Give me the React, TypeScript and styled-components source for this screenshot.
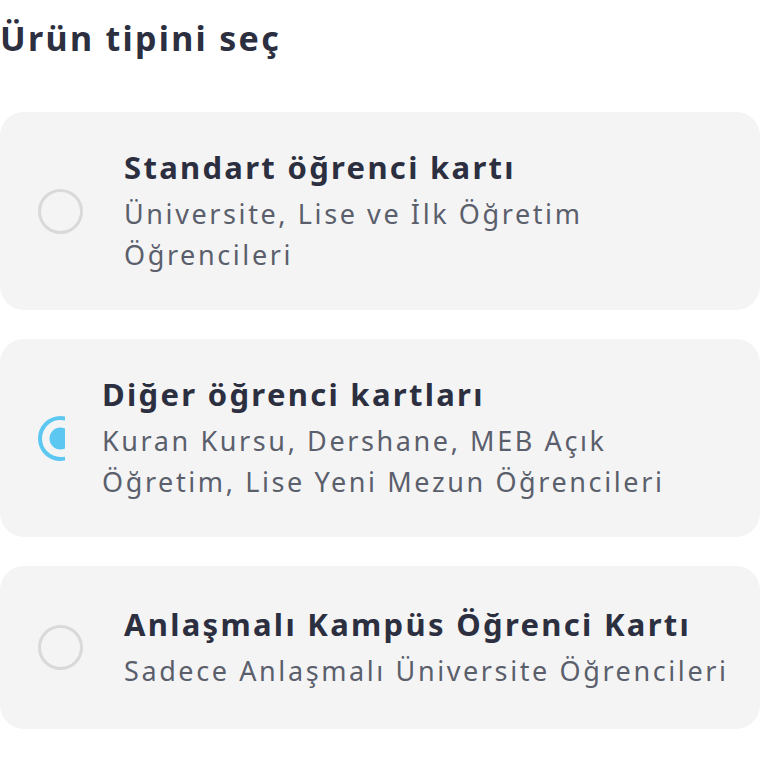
import React from "react";
import styled, { createGlobalStyle } from "styled-components";

const GlobalStyle = createGlobalStyle`
  html, body {
    margin: 0;
    padding: 0;
    background: #ffffff;
  }
  body {
    font-family: "Noto Sans", "Open Sans", sans-serif;
    -webkit-font-smoothing: antialiased;
  }
`;

const Page = styled.div`
  width: 768px;
  padding-top: 10px;
  overflow: hidden;
`;

const Heading = styled.h1`
  margin: 0;
  font-size: 34px;
  line-height: 56px;
  font-weight: 700;
  letter-spacing: 2.3px;
  color: #2c2f40;
`;

const List = styled.div`
  display: flex;
  flex-direction: column;
  gap: 29px;
  margin-top: 46px;
  width: 760px;
`;

const Card = styled.label<{ $shift?: boolean; $single?: boolean }>`
  display: flex;
  align-items: center;
  gap: ${(p) => (p.$shift ? "37px" : "41px")};
  padding: ${(p) => (p.$single ? "38px" : "35px")} 20px;
  padding-left: 38px;
  background: #f4f4f5;
  border-radius: 24px;
  cursor: pointer;
`;

const RadioBox = styled.div<{ $clip?: boolean }>`
  flex: none;
  width: ${(p) => (p.$clip ? "27px" : "45px")};
  height: 45px;
  overflow: hidden;
`;

const Texts = styled.div`
  display: flex;
  flex-direction: column;
  gap: 6px;
`;

const Title = styled.div`
  font-size: 31px;
  line-height: 40px;
  font-weight: 700;
  letter-spacing: 2.3px;
  color: #2c2f40;
  white-space: nowrap;
`;

const Sub = styled.div`
  font-size: 27px;
  line-height: 41px;
  font-weight: 400;
  letter-spacing: 2.6px;
  color: #5b5f6c;
  white-space: nowrap;
`;

function Radio({ checked, clip }: { checked?: boolean; clip?: boolean }) {
  return (
    <RadioBox $clip={clip}>
      <svg width="45" height="45" viewBox="0 0 45 45">
        {checked ? (
          <>
            <circle cx="22.5" cy="22.5" r="20.5" fill="none" stroke="#5cc8f2" strokeWidth="4" />
            <circle cx="22.5" cy="22.5" r="11" fill="#5cc8f2" />
          </>
        ) : (
          <circle cx="22.5" cy="22.5" r="21" fill="none" stroke="#d9d9db" strokeWidth="3" />
        )}
      </svg>
    </RadioBox>
  );
}

const options = [
  {
    title: "Standart öğrenci kartı",
    sub: ["Üniversite, Lise ve İlk Öğretim", "Öğrencileri"],
  },
  {
    title: "Diğer öğrenci kartları",
    sub: ["Kuran Kursu, Dershane, MEB Açık", "Öğretim, Lise Yeni Mezun Öğrencileri"],
    checked: true,
  },
  {
    title: "Anlaşmalı Kampüs Öğrenci Kartı",
    sub: ["Sadece Anlaşmalı Üniversite Öğrencileri"],
  },
];

export default function App() {
  return (
    <Page>
      <GlobalStyle />
      <Heading>Ürün tipini seç</Heading>
      <List>
        {options.map((o) => (
          <Card key={o.title} $shift={o.checked} $single={o.sub.length === 1}>
            <Radio checked={o.checked} clip={o.checked} />
            <Texts>
              <Title>{o.title}</Title>
              <div>
                {o.sub.map((s) => (
                  <Sub key={s}>{s}</Sub>
                ))}
              </div>
            </Texts>
          </Card>
        ))}
      </List>
    </Page>
  );
}
